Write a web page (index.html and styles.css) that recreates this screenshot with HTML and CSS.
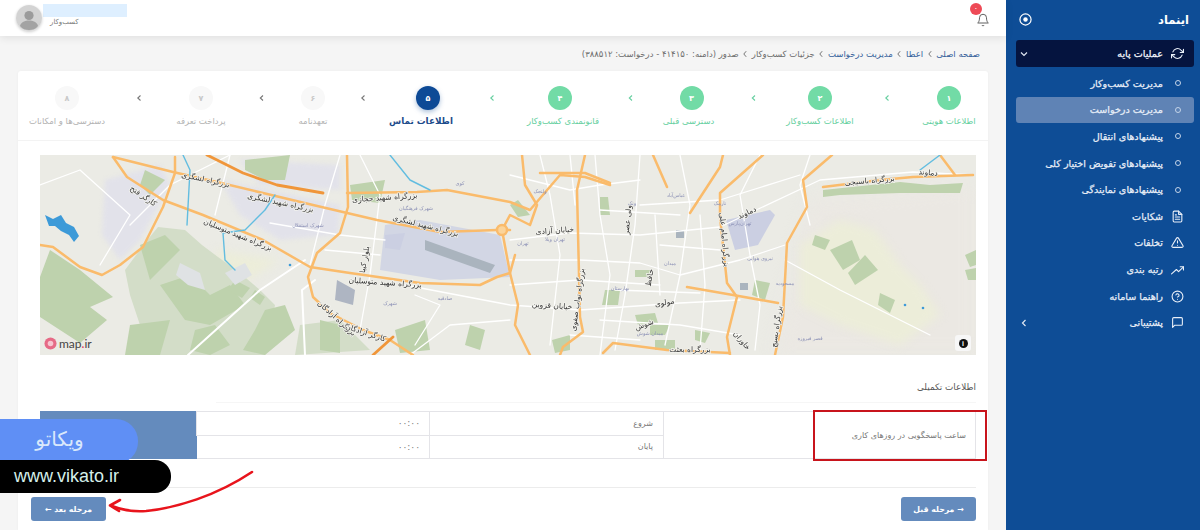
FILE: index.html
```html
<!DOCTYPE html>
<html lang="fa" dir="rtl">
<head>
<meta charset="utf-8">
<title>اینماد</title>
<link rel="stylesheet" href="styles.css">
</head>
<body>
<aside class="sidebar">
  <div class="brand">
    <span class="brand-name">اینماد</span>
    <svg class="brand-icon" width="13" height="13" viewBox="0 0 14 14"><circle cx="7" cy="7" r="6" fill="none" stroke="#fff" stroke-width="1.3"/><circle cx="7" cy="7" r="2.4" fill="#fff"/></svg>
  </div>
  <nav class="menu">
    <div class="item item-head">
      <svg class="ic" viewBox="0 0 24 24"><path d="M23 4v6h-6M1 20v-6h6"/><path d="M3.5 9a9 9 0 0 1 14.9-3.4L23 10M1 14l4.6 4.4A9 9 0 0 0 20.5 15"/></svg>
      <span class="lbl">عملیات پایه</span>
      <svg class="caret" viewBox="0 0 10 10"><path d="M2 3.5l3 3 3-3"/></svg>
    </div>
    <div class="item"><span class="dot-wrap"><i class="dot"></i></span><span class="lbl">مدیریت کسب‌وکار</span></div>
    <div class="item item-active"><span class="dot-wrap"><i class="dot"></i></span><span class="lbl">مدیریت درخواست</span></div>
    <div class="item"><span class="dot-wrap"><i class="dot"></i></span><span class="lbl">پیشنهادهای انتقال</span></div>
    <div class="item"><span class="dot-wrap"><i class="dot"></i></span><span class="lbl">پیشنهادهای تفویض اختیار کلی</span></div>
    <div class="item"><span class="dot-wrap"><i class="dot"></i></span><span class="lbl">پیشنهادهای نمایندگی</span></div>
    <div class="item">
      <svg class="ic" viewBox="0 0 24 24"><path d="M14 2H6a2 2 0 0 0-2 2v16a2 2 0 0 0 2 2h12a2 2 0 0 0 2-2V8z"/><path d="M14 2v6h6M8 13h8M8 17h8M8 9h2"/></svg>
      <span class="lbl">شکایات</span>
    </div>
    <div class="item">
      <svg class="ic" viewBox="0 0 24 24"><path d="M10.3 3.9L1.8 18a2 2 0 0 0 1.7 3h17a2 2 0 0 0 1.7-3L13.7 3.9a2 2 0 0 0-3.4 0z"/><path d="M12 9v4M12 17h.01"/></svg>
      <span class="lbl">تخلفات</span>
    </div>
    <div class="item">
      <svg class="ic" viewBox="0 0 24 24"><path d="M23 7l-9 9-4-4-9 8"/><path d="M17 7h6v6"/></svg>
      <span class="lbl">رتبه بندی</span>
    </div>
    <div class="item">
      <svg class="ic" viewBox="0 0 24 24"><circle cx="12" cy="12" r="10"/><path d="M9.1 9a3 3 0 0 1 5.800 1c0 2-3 3-3 3M12 17h.01"/></svg>
      <span class="lbl">راهنما سامانه</span>
    </div>
    <div class="item">
      <svg class="ic" viewBox="0 0 24 24"><path d="M21 15a2 2 0 0 1-2 2H7l-4 4V5a2 2 0 0 1 2-2h14a2 2 0 0 1 2 2z"/></svg>
      <span class="lbl">پشتیبانی</span>
      <svg class="caret" viewBox="0 0 10 10"><path d="M6.500 2l-3 3 3 3"/></svg>
    </div>
  </nav>
</aside>

<div class="main">
  <header class="topbar">
    <div class="bell">
      <svg width="14" height="15" viewBox="0 0 24 24" fill="none" stroke="#555" stroke-width="1.6"><path d="M18 9a6 6 0 0 0-12 0c0 7-3 9-3 9h18s-3-2-3-9"/><path d="M10 21.500a2.200 2.200 0 0 0 4 0"/></svg>
      <span class="badge">۰</span>
    </div>
    <div class="user">
      <div class="user-text">
        <div class="user-name"></div>
        <div class="user-role">کسب‌وکار</div>
      </div>
      <div class="avatar">
        <svg width="26" height="26" viewBox="0 0 26 26"><circle cx="13" cy="13" r="13" fill="#d3d3d3"/><circle cx="13" cy="10.500" r="4.600" fill="#9b9b9b"/><path d="M4 21c1-4 5-5.500 9-5.500s8 1.500 9 5.500c-2.500 3-5.500 4-9 4s-6.500-1-9-4z" fill="#a3a3a3"/></svg>
      </div>
    </div>
  </header>

  <div class="crumbs">
    <a>صفحه اصلی</a><svg class="sep" viewBox="0 0 6 8"><path d="M4.200 1.200L1.800 4l2.400 2.800"/></svg><a>اعطا</a><svg class="sep" viewBox="0 0 6 8"><path d="M4.200 1.200L1.800 4l2.400 2.800"/></svg><a>مدیریت درخواست</a><svg class="sep" viewBox="0 0 6 8"><path d="M4.200 1.200L1.800 4l2.400 2.800"/></svg><span>جزئیات کسب‌وکار</span><svg class="sep" viewBox="0 0 6 8"><path d="M4.200 1.200L1.800 4l2.400 2.800"/></svg><span>صدور (دامنه: ۴۱۴۱۵۰ - درخواست: ۳۸۸۵۱۲)</span>
  </div>

  <section class="card">
    <div class="stepper">
      <div class="step done s1"><span class="num">۱</span><span class="name">اطلاعات هویتی</span></div>
      <svg class="chev done g70" viewBox="0 0 8 24"><path d="M5.500 9.500L2.800 12l2.700 2.500"/></svg>
      <div class="step done s2"><span class="num">۲</span><span class="name">اطلاعات کسب‌وکار</span></div>
      <svg class="chev done g69" viewBox="0 0 8 24"><path d="M5.500 9.500L2.800 12l2.700 2.500"/></svg>
      <div class="step done s3"><span class="num">۳</span><span class="name">دسترسی قبلی</span></div>
      <svg class="chev done g67" viewBox="0 0 8 24"><path d="M5.500 9.500L2.800 12l2.700 2.500"/></svg>
      <div class="step done s4"><span class="num">۴</span><span class="name">قانونمندی کسب‌وکار</span></div>
      <svg class="chev done g62" viewBox="0 0 8 24"><path d="M5.500 9.500L2.800 12l2.700 2.500"/></svg>
      <div class="step current s5"><span class="num">۵</span><span class="name">اطلاعات تماس</span></div>
      <svg class="chev g64" viewBox="0 0 8 24"><path d="M5.500 9.500L2.800 12l2.700 2.500"/></svg>
      <div class="step s6"><span class="num">۶</span><span class="name">تعهدنامه</span></div>
      <svg class="chev g67" viewBox="0 0 8 24"><path d="M5.500 9.500L2.800 12l2.700 2.500"/></svg>
      <div class="step s7"><span class="num">۷</span><span class="name">پرداخت تعرفه</span></div>
      <svg class="chev g70" viewBox="0 0 8 24"><path d="M5.500 9.500L2.800 12l2.700 2.500"/></svg>
      <div class="step s8"><span class="num">۸</span><span class="name">دسترسی‌ها و امکانات</span></div>
    </div>

    <div class="card-body">
      <div class="map">
        <svg class="map-svg" width="936" height="200" viewBox="0 0 936 200">
          <rect class="m-base" width="936" height="200"/>
          <polygon class="m-sand" points="770,45 936,30 936,200 735,200 755,100"/>
          <polygon class="m-beige" points="760,90 800,65 835,75 860,110 880,130 900,160 860,190 800,170 760,150"/>
          <polygon class="m-beige" points="175,95 240,105 200,130 180,120"/>
          <polygon class="m-lav" points="65,25 120,10 130,30 100,85 80,105 62,80"/>
          <polygon class="m-lav" points="180,25 300,50 298,80 240,85 200,60"/>
          <polygon class="m-lav" points="200,5 300,10 300,35 220,30"/>
          <polygon class="m-lav2" points="345,70 380,65 460,80 470,122 400,125 340,115"/>
          <polygon class="m-lav4" points="345,80 365,78 360,95 345,93"/>
          <polygon class="m-lav3" points="385,85 455,110 450,118 385,95"/>
          <polygon class="m-gray" points="297,125 315,135 313,150 295,145"/>
          <polygon class="m-lav4" points="686,65 730,55 735,60 718,90 695,95"/>

          <polygon class="m-green2" points="85,115 105,88 118,72 145,75 162,90 178,102 200,118 220,135 235,150 225,200 120,200 100,170 90,140"/>
          <polygon class="m-green" points="0,122 10,95 40,115 73,142 50,152 67,165 40,188 0,162"/>
          <polygon class="m-green" points="100,90 125,80 140,95 110,125"/>
          <polygon class="m-green" points="120,130 150,120 170,140 190,130 205,150 170,170 145,165"/>
          <polygon class="m-green" points="195,125 210,133 202,143 188,135"/>
          <polygon class="m-green" points="215,135 225,142 220,150 210,143"/>
          <polygon class="m-green" points="90,170 130,165 120,200 85,200"/>
          <polygon class="m-green" points="225,155 245,150 255,175 225,200 203,195 215,175"/>
          <polygon class="m-green" points="155,175 175,170 190,190 170,200 150,195"/>
          <polygon class="m-green2" points="260,170 300,165 330,195 255,200"/>
          <polygon class="m-green" points="280,165 300,170 300,198 280,195"/>
          <polygon class="m-pale" points="140,108 160,118 165,135 148,130 136,120"/>
          <polygon class="m-pale" points="185,118 205,108 212,120 195,130"/>
          <polygon class="m-green" points="205,5 250,0 245,25 225,25 205,15"/>
          <polygon class="m-green" points="310,30 345,25 340,48 312,45"/>
          <polygon class="m-green" points="105,15 125,25 110,40 100,30"/>
          <polygon class="m-green" points="355,175 385,165 390,195 360,198"/>
          <polygon class="m-green" points="430,170 445,175 440,195 425,190"/>
          <polygon class="m-green" points="783,35 860,27 890,30 923,28 920,38 860,38 800,40 783,42"/>
          <polygon class="m-green" points="775,80 790,85 785,95 772,90"/>
          <polygon class="m-green" points="790,95 812,85 820,105 803,115"/>
          <polygon class="m-green" points="808,118 825,100 838,115 815,130"/>
          <polygon class="m-green" points="840,138 855,145 850,158 838,150"/>
          <polygon class="m-green" points="560,42 568,42 570,60 560,60"/>
          <polygon class="m-green" points="595,115 610,115 610,122 595,122"/>
          <polygon class="m-green" points="615,185 635,185 635,195 615,195"/>
          <polygon class="m-green" points="655,175 670,178 665,188 655,185"/>
          <polygon class="m-green" points="565,135 580,135 578,150 562,150"/>
          <polygon class="m-green" points="470,50 478,45 490,60 478,62"/>
          <polygon class="m-green" points="595,160 615,158 618,168 598,170"/>
          <polygon class="m-green" points="512,185 530,180 530,195 515,198"/>
          <polygon class="m-green" points="715,125 730,128 725,145 712,140"/>
          <polygon class="m-green" points="610,170 630,170 625,180 610,180"/>
          <polygon class="m-green" points="925,100 936,95 936,110 930,112"/>
          <polygon class="m-green" points="925,115 936,113 936,125 928,125"/>
          <polygon class="m-lav3" points="636,75 644,75 644,83 636,83"/>
          <polygon class="m-lav3" points="700,128 708,128 708,135 700,135"/>

          <polyline class="r-w" points="90,70 130,30 190,0"/>
          <polyline class="r-w2" points="148,200 220,135 265,105"/>
          <polyline class="r-w2" points="265,200 262,135 275,125"/>
          <polyline class="r-w" points="190,0 175,60"/>
          <polyline class="r-w" points="300,0 285,50 270,110"/>
          <polyline class="r-w" points="320,0 340,40 330,120 320,175"/>
          <polyline class="r-w" points="230,68 300,80 345,85"/>
          <polyline class="r-w" points="285,95 340,100"/>
          <polyline class="r-w" points="365,130 470,150 540,155 640,148 700,145"/>
          <polyline class="r-w" points="370,200 410,170 470,165"/>
          <polyline class="r-w" points="470,85 530,78 600,80 680,72 780,25 873,17 933,20"/>
          <polyline class="r-w" points="470,105 540,105 600,108 640,120 700,105 745,90"/>
          <polyline class="r-w" points="555,0 560,60 570,120 560,200"/>
          <polyline class="r-w" points="600,0 595,70 585,140 575,195"/>
          <polyline class="r-w" points="640,0 650,50 640,120 625,190"/>
          <polyline class="r-w" points="660,60 665,130 660,195"/>
          <polyline class="r-w" points="720,0 700,40 710,100 720,150 715,195"/>
          <polyline class="r-w" points="500,0 510,40 520,100 510,190"/>
          <polyline class="r-w" points="470,20 530,35 560,30 600,25"/>
          <polyline class="r-w" points="470,130 540,125 620,130"/>
          <polyline class="r-w" points="560,165 640,170 700,180"/>
          <polyline class="r-w" points="560,55 640,60"/>
          <polyline class="r-w" points="530,180 600,185"/>
          <polyline class="r-w" points="620,90 680,95"/>
          <polyline class="r-w" points="575,135 660,138"/>
          <polyline class="r-w" points="530,0 535,50"/>
          <polyline class="r-w" points="615,60 620,140"/>
          <polyline class="r-w" points="745,105 800,135 850,160 890,180"/>
          <polyline class="r-w" points="770,0 760,30 770,70"/>
          <polyline class="r-w" points="375,140 400,150 375,190"/>
          <polyline class="r-w" points="600,50 680,45 760,20"/>
          <polyline class="r-w" points="0,30 40,15 90,60 60,110"/>

          <polyline class="r-o" points="73,2 133,17 177,27 223,38 273,50 337,65 400,77 457,75 470,75"/>
          <polyline class="r-o" points="307,38 377,37 407,35 470,47 490,55 520,20 545,22 570,30"/>
          <polyline class="r-d" points="167,0 203,18 237,30 283,38"/>
          <polyline class="r-o" points="73,2 87,22 123,45 163,60 223,85 270,112 310,118 380,128 440,130 457,122 470,118 475,100"/>
          <polyline class="r-o" points="0,90 13,92 40,112 62,120 80,110 103,92 123,52 135,18 135,2"/>
          <polyline class="r-o" points="307,0 308,52 300,78 277,98 268,122 273,142 290,158 323,175 350,185 373,200"/>
          <polyline class="r-d" points="333,200 353,182"/>
          <polyline class="r-o" points="482,0 485,30 497,50 490,70 470,60 462,75 470,118 478,150 475,170 490,200"/>
          <polyline class="r-o" points="545,0 537,35 540,162 543,177 523,192 520,200"/>
          <polyline class="r-o" points="500,18 545,18 570,28"/>
          <polyline class="r-o" points="613,0 627,32"/>
          <polyline class="r-o" points="683,0 680,12 650,58"/>
          <polyline class="r-o" points="723,0 680,38 680,62 687,128 697,142 687,182 690,200"/>
          <polyline class="r-o" points="647,132 693,140 738,148"/>
          <polyline class="r-o" points="563,198 573,188 627,195 690,198"/>
          <polyline class="r-o" points="792,0 763,25 767,52 747,88 743,162 735,200"/>
          <polyline class="r-o" points="783,32 840,25 873,22 933,20"/>
          <polyline class="r-o" points="900,0 915,20"/>
          <circle class="r-ring" cx="462" cy="75" r="5"/>

          <path class="water" d="M5,60l8,4 8,-4 5,8 8,4 5,9 -5,6 -5,-7 -8,-4 -6,-5 -6,0z"/>
          <polyline class="river" points="143,0 150,15 147,70"/>
          <polyline class="river" points="235,40 225,55 205,75 183,78 185,105 195,115"/>
          <polyline class="river" points="350,0 370,25 390,35"/>
          <polyline class="river" points="880,15 900,0"/>

          <g class="m-lbl">
            <text x="165" y="27" transform="rotate(12 165 27)">بزرگراه لشگری</text>
            <text x="240" y="50" transform="rotate(12 240 50)">بزرگراه شهید لشگری</text>
            <text x="345" y="45" transform="rotate(-4 345 45)">بزرگراه شهید حجازی</text>
            <text x="385" y="73" transform="rotate(14 385 73)">بزرگراه شهید لشگری</text>
            <text x="197" y="82" transform="rotate(22 197 82)">بزرگراه شهید متوسلیان</text>
            <text x="345" y="130" transform="rotate(4 345 130)">بزرگراه شهید متوسلیان</text>
            <text x="102" y="43" transform="rotate(35 102 43)">کارگر فتح</text>
            <text x="295" y="165" transform="rotate(42 295 165)">بزرگراه آزادگان</text>
            <text x="325" y="180" transform="rotate(18 325 180)">کارگر آزادگان</text>
            <text x="327" y="105" transform="rotate(-80 327 105)">بلوار کبیا</text>
            <text x="515" y="78" transform="rotate(-4 515 78)">خیابان آزادی</text>
            <text x="512" y="153" transform="rotate(4 512 153)">خیابان قزوین</text>
            <text x="540" y="145" transform="rotate(-82 540 145)">بزرگراه نواب صفوی</text>
            <text x="590" y="65" transform="rotate(-85 590 65)">ولی عصر</text>
            <text x="612" y="123" transform="rotate(-80 612 123)">حافظ</text>
            <text x="625" y="150" transform="rotate(-10 625 150)">مولوی</text>
            <text x="605" y="172" transform="rotate(-20 605 172)">شوش</text>
            <text x="682" y="85" transform="rotate(85 682 85)">بزرگراه امام علی</text>
            <text x="708" y="60" transform="rotate(-25 708 60)">دماوند</text>
            <text x="830" y="28" transform="rotate(-5 830 28)">بزرگراه باسیجی</text>
            <text x="888" y="20" transform="rotate(5 888 20)">دماوند</text>
            <text x="739" y="172" transform="rotate(-82 739 172)">بزرگراه بسیج</text>
            <text x="700" y="187" transform="rotate(50 700 187)">خاوران</text>
            <text x="650" y="197">بزرگراه بعثت</text>
          </g>
          <g class="m-sub">
            <text x="268" y="72">شهرک استقلال</text>
            <text x="376" y="55">شهرک فرهنگیان</text>
            <text x="500" y="38">ولنجک</text>
            <text x="515" y="86">تهران ویلا</text>
            <text x="592" y="50">ونک</text>
            <text x="636" y="42">عباس‌آباد</text>
            <text x="680" y="50">نارمک</text>
            <text x="720" y="105">نیروی هوایی</text>
            <text x="745" y="130">مسعودیه</text>
            <text x="770" y="185">قصر فیروزه</text>
            <text x="610" y="180">میدان شوش</text>
            <text x="580" y="135">بهارستان</text>
            <text x="483" y="90">تهران</text>
            <text x="630" y="110">میدان</text>
            <text x="700" y="70">تهران‌پارس</text>
            <text x="405" y="145">صادقیه</text>
            <text x="350" y="150">شهرک</text>
            <text x="420" y="30">کوی</text>
          </g>
          <circle class="water-dot" cx="250" cy="110" r="1.300"/>
          <circle class="water-dot" cx="865" cy="150" r="1.300"/>
          <circle class="water-dot" cx="883" cy="153" r="1.300"/>
        </svg>
        <div class="map-logo">
          <svg width="13" height="13" viewBox="0 0 14 14"><circle cx="7" cy="7" r="6.500" fill="#e66a86"/><circle cx="7" cy="7" r="3" fill="#f7c5d0"/></svg>
          <span>map<b>.</b>ir</span>
        </div>
        <div class="map-info"><span>i</span></div>
      </div>

      <h2 class="sec-title">اطلاعات تکمیلی</h2>
      <div class="sec-rule"></div>

      <table class="hours">
        <tr>
          <td class="c-title" rowspan="2">ساعت پاسخگویی در روزهای کاری</td>
          <td class="c-gap" rowspan="2"></td>
          <td class="c-lab">شروع</td>
          <td class="c-val">۰۰:۰۰</td>
          <td class="c-blue" rowspan="2"></td>
        </tr>
        <tr>
          <td class="c-lab">پایان</td>
          <td class="c-val">۰۰:۰۰</td>
        </tr>
      </table>

      <div class="actions">
        <button class="btn">→ مرحله قبل</button>
        <button class="btn btn-next">مرحله بعد ←</button>
      </div>
    </div>
  </section>
</div>

<div class="red-box"></div>
<div class="promo" dir="ltr">
  <div class="promo-name" dir="rtl">ویکاتو</div>
  <div class="promo-url">www.vikato.ir</div>
</div>
<svg class="arrow" width="160" height="50" viewBox="0 0 160 50">
  <path d="M146 2C110 26 70 38 40 41C26 42 16 40 6 36" fill="none" stroke="#e8141c" stroke-width="2.600" stroke-linecap="round"/>
  <path d="M14 30L4 35.500L13 41" fill="none" stroke="#e8141c" stroke-width="2.600" stroke-linecap="round" stroke-linejoin="round"/>
</svg>
</body>
</html>
```
FILE: styles.css
```css
* { box-sizing: border-box; }
html, body { margin: 0; padding: 0; height: 530px; overflow: hidden; }
body {
  display: flex;
  background: #f5f5f5;
  font-family: "DejaVu Sans", sans-serif;
  color: #555;
  position: relative;
}

/* Sidebar */
.sidebar {
  flex: none;
  width: 194px;
  height: 530px;
  background: #0e4d96;
  padding: 0 6px 0 10px;
  color: #f1f5fb;
}
.brand {
  height: 40px;
  display: flex;
  align-items: center;
  justify-content: space-between;
  padding: 0 5px 1px 3px;
}
.brand-name { font-size: 11.500px; font-weight: bold; color: #fff; }
.brand-icon { display: block; }
.item {
  height: 26.600px;
  display: flex;
  align-items: center;
  border-radius: 3px;
  font-size: 9.600px;
  color: #e9eff8;
  -webkit-text-stroke: .25px #e9eff8;
}
.item-head { background: #05143f; height: 27px; margin-bottom: 3px; color: #fff; }
.item-active { background: #5f83b5; }
.ic {
  flex: none;
  width: 13px;
  height: 13px;
  margin-right: 10px;
  fill: none;
  stroke: #e9eff8;
  stroke-width: 2;
  stroke-linecap: round;
  stroke-linejoin: round;
}
.lbl { margin-right: 8px; white-space: nowrap; }
.dot-wrap { flex: none; width: 13px; margin-right: 10px; display: flex; justify-content: center; }
.dot { width: 6px; height: 6px; border: 1px solid #c3d3e8; border-radius: 50%; }
.caret {
  width: 10px;
  height: 10px;
  margin-right: auto;
  margin-left: 3px;
  fill: none;
  stroke: #dfe7f2;
  stroke-width: 1.200;
}

/* Main */
.main {
  flex: 1;
  min-width: 0;
  height: 530px;
  display: flex;
  flex-direction: column;
}
.topbar {
  height: 36px;
  flex: none;
  background: #fff;
  box-shadow: 0 2px 8px rgba(0, 0, 0, .09);
  display: flex;
  align-items: center;
  justify-content: space-between;
  padding: 0 16px;
  position: relative;
}
.bell { position: relative; width: 14px; height: 15px; margin-top: 2px; }
.bell svg { display: block; }
.badge {
  position: absolute;
  top: -9px;
  left: -6px;
  width: 12px;
  height: 12px;
  border-radius: 50%;
  background: #ee4a56;
  color: #fff;
  font-size: 8px;
  line-height: 11px;
  text-align: center;
}
.user { display: flex; align-items: center; gap: 1px; }
.user-text { width: 84px; margin-top: -6px; }
.user-name { height: 13px; background: #deefff; }
.user-role { font-size: 7px; color: #777; margin: 1px 0 0 7px; text-align: left; }
.avatar { width: 26px; height: 26px; border-radius: 50%; box-shadow: 0 1px 3px rgba(0, 0, 0, .2); }
.avatar svg { display: block; }

.crumbs {
  height: 35px;
  flex: none;
  display: flex;
  align-items: center;
  padding-right: 26px;
  font-size: 8.500px;
  color: #6d6d6d;
  white-space: nowrap;
}
.crumbs a { color: #34609a; }
.sep { width: 6px; height: 8px; margin: 0 3.600px; fill: none; stroke: #666; stroke-width: .9; }

.card {
  flex: 1;
  margin: 0 18px;
  background: #fff;
  border-radius: 3px 3px 0 0;
  box-shadow: 0 0 3px rgba(0, 0, 0, .04);
}

/* Stepper */
.stepper {
  height: 70px;
  display: flex;
  align-items: flex-start;
  padding: 15px 12px 0;
  border-bottom: 1px solid #f3f3f3;
}
.step { display: flex; flex-direction: column; align-items: center; flex: none; color: #b3b3b3; }
.s1 { width: 54px; }
.s2 { width: 64px; }
.s3 { width: 55px; }
.s4 { width: 74px; }
.s5 { width: 66px; }
.s6 { width: 36px; }
.s7 { width: 54px; }
.s8 { width: 74px; }
.num {
  width: 24px;
  height: 24px;
  border-radius: 50%;
  background: #f8f8f8;
  display: flex;
  align-items: center;
  justify-content: center;
  font-size: 8px;
  font-weight: bold;
  color: #c9c9c9;
}
.name { font-size: 8.500px; margin-top: 6px; white-space: nowrap; }
.s3 .name { margin-right: 6px; }
.s4 .name { margin-left: 6px; }
.s5 .name { margin-right: 14px; }
.step.done { color: #66cfa0; }
.step.done .num { background: #72dba6; color: #fff; }
.step.current { color: #1d4b8b; font-weight: bold; }
.step.current .name { font-size: 8.800px; }
.step.current .num { background: #0d4a96; color: #fff; box-shadow: 0 2px 5px rgba(13, 74, 150, .35); }
.chev {
  flex: none;
  height: 24px;
  fill: none;
  stroke: #777;
  stroke-width: 1.100;
}
.chev.done { stroke: #66cfa0; }
.g62 { width: 62px; }
.g64 { width: 64px; }
.g67 { width: 67px; }
.g69 { width: 69px; }
.g70 { width: 70px; }

/* Body */
.card-body { padding: 14px 12px 0 13px; }
.map { position: relative; width: 936px; height: 200px; overflow: hidden; }
.map-svg { display: block; filter: blur(.35px); }
.m-base { fill: #ebebe5; }
.m-sand { fill: #ebe8e3; filter: blur(8px); }
.m-beige { fill: #ecedd9; filter: blur(5px); }
.m-lav { fill: #e2e2ea; filter: blur(2px); }
.m-lav2 { fill: #d2d6e4; }
.m-lav4 { fill: #cbcfe2; }
.m-lav3 { fill: #aab4be; }
.m-gray { fill: #aeb5c2; }
.m-green { fill: #bed2ad; }
.m-green2 { fill: #d3ddc8; }
.m-pale { fill: #dfe2e4; }
.r-w, .r-w2, .r-o, .r-d, .river { fill: none; stroke-linecap: round; stroke-linejoin: round; }
.r-w { stroke: #fff; stroke-width: 1.300; }
.r-w2 { stroke: #fff; stroke-width: 2; }
.r-o { stroke: #fabb6b; stroke-width: 2.500; }
.r-d { stroke: #f0963a; stroke-width: 2.800; }
.r-ring { fill: #fbd49a; stroke: #fabb6b; stroke-width: 2.500; }
.river { stroke: #62bde0; stroke-width: 1.400; }
.water { fill: #3d9ad8; }
.water-dot { fill: #3d9ad8; }
.m-lbl text { font-size: 7.500px; fill: #333; text-anchor: middle; stroke: #f3f3ee; stroke-width: 1.500px; paint-order: stroke; }
.m-sub text { font-size: 5px; fill: #8a8fb5; text-anchor: middle; }
.map-logo {
  position: absolute;
  left: 4px;
  bottom: 4px;
  display: flex;
  align-items: center;
  gap: 2px;
  direction: ltr;
  font-family: "Lato", sans-serif;
  font-size: 12px;
  color: #444;
}
.map-logo svg { display: block; }
.map-logo b { color: #e14a6d; }
.map-info {
  position: absolute;
  right: 5px;
  bottom: 4px;
  width: 16px;
  height: 16px;
  background: #f7f7f7;
  border-radius: 3px;
  display: flex;
  align-items: center;
  justify-content: center;
}
.map-info span {
  width: 9px;
  height: 9px;
  border-radius: 50%;
  background: #111;
  color: #fff;
  font: bold 7px/9px "Liberation Sans", sans-serif;
  text-align: center;
}

.sec-title { margin: 25px 0 0; font-size: 8.800px; font-weight: normal; color: #555; height: 14px; line-height: 14px; }
.sec-rule { height: 1px; background: #f6f6f6; margin: 8px 0 8px 185px; }

.hours {
  width: 936px;
  border-collapse: collapse;
  table-layout: fixed;
  font-size: 8px;
  color: #777;
}
.hours td { height: 23.500px; padding: 0; border: 1px solid #e4e4e8; }
.c-title { width: 162px; padding-right: 9px !important; white-space: nowrap; }
.c-gap { width: 150px; }
.c-lab { width: 234px; padding-right: 10px !important; }
.c-val { width: 233px; padding-right: 9px !important; color: #777; font-size: 9px; }
.c-blue { background: #648bbd; border-color: #648bbd !important; }

.actions {
  margin-top: 28px;
  border-top: 1px solid #ececec;
  padding-top: 9px;
  display: flex;
  justify-content: space-between;
}
.btn {
  width: 75px;
  height: 24px;
  border: 0;
  border-radius: 3px;
  background: #648bbd;
  color: #fff;
  font: bold 7.800px "DejaVu Sans", sans-serif;
  padding: 0;
}

/* Overlays */
.red-box {
  position: absolute;
  left: 813px;
  top: 410px;
  width: 174px;
  height: 51px;
  border: 2px solid #c8141c;
}
.promo { position: absolute; left: 0; top: 419px; width: 171px; }
.promo-name {
  width: 138px;
  height: 45px;
  margin-bottom: -4px;
  background: #5f8ff5;
  border-radius: 0 22px 22px 0;
  color: #d9e8fb;
  font-size: 20px;
  line-height: 41px;
  text-align: center;
  padding-right: 19px;
  direction: ltr;
}
.promo-url {
  position: relative;
  width: 171px;
  height: 33px;
  background: #000;
  border-radius: 0 16px 16px 0;
  color: #d5efe9;
  font: 18px/33px "Liberation Sans", sans-serif;
  padding-left: 14px;
}
.arrow { position: absolute; left: 106px; top: 470px; }
```
